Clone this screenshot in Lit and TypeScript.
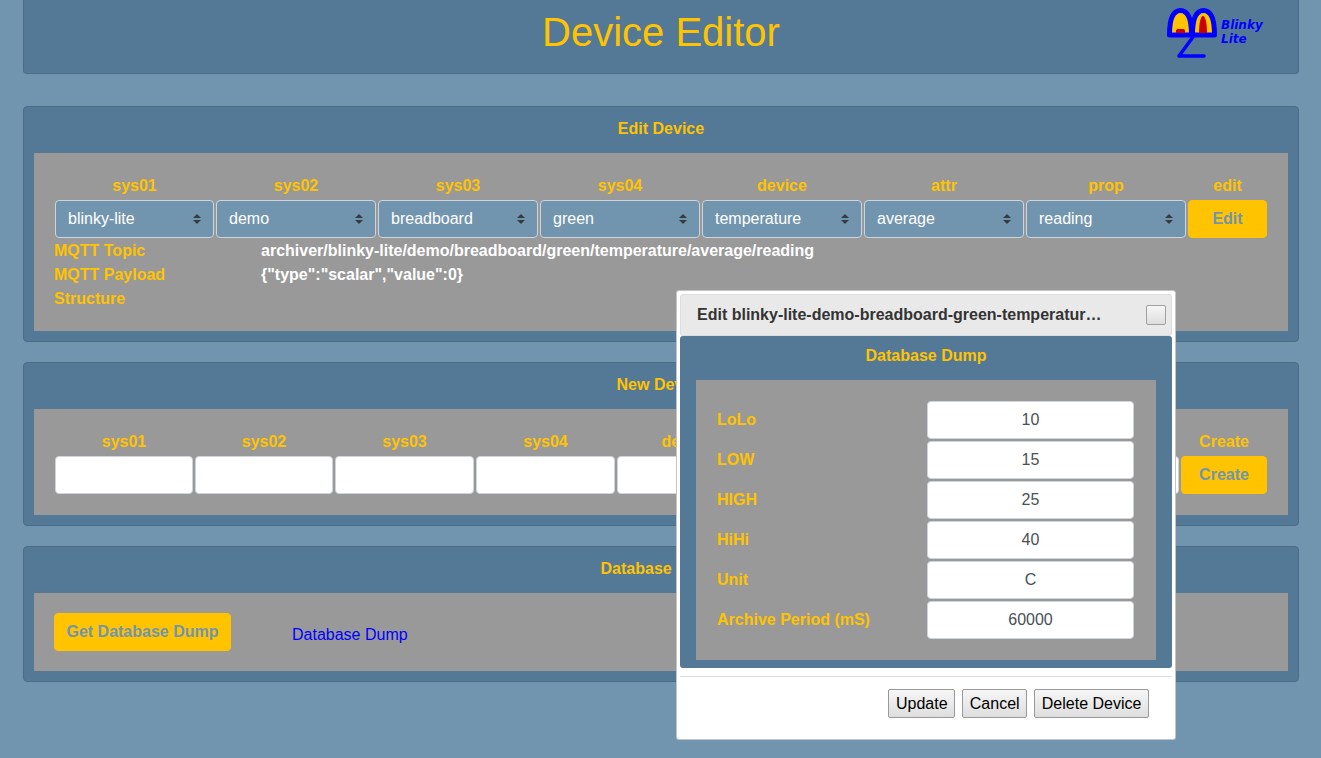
import { LitElement, css, html } from 'lit';
import { customElement } from 'lit/decorators.js';

const EDIT_FIELDS = [
  { label: 'sys01', value: 'blinky-lite' },
  { label: 'sys02', value: 'demo' },
  { label: 'sys03', value: 'breadboard' },
  { label: 'sys04', value: 'green' },
  { label: 'device', value: 'temperature' },
  { label: 'attr', value: 'average' },
  { label: 'prop', value: 'reading' },
];

const NEW_FIELDS = ['sys01', 'sys02', 'sys03', 'sys04', 'device', 'attr', 'prop', 'type'];

const INFO_ROWS = [
  { label: 'MQTT Topic', value: 'archiver/blinky-lite/demo/breadboard/green/temperature/average/reading' },
  { label: 'MQTT Payload', value: '{"type":"scalar","value":0}' },
  { label: 'Structure', value: '' },
];

const LIMITS = [
  { label: 'LoLo', value: '10' },
  { label: 'LOW', value: '15' },
  { label: 'HIGH', value: '25' },
  { label: 'HiHi', value: '40' },
  { label: 'Unit', value: 'C' },
  { label: 'Archive Period (mS)', value: '60000' },
];

@customElement('app-root')
export class AppRoot extends LitElement {
  static styles = css`
    :host {
      display: block;
      position: relative;
      min-height: 758px;
      background: #7295af;
      font-family: 'Liberation Sans', Arial, sans-serif;
      font-size: 16px;
      line-height: 24px;
      color: #ffc300;
      overflow: hidden;
    }

    .page {
      display: flex;
      flex-direction: column;
      gap: 20px;
      padding: 0 22px 0 23px;
    }

    .panel {
      border: 1px solid #4a6d89;
      border-radius: 4px;
      background: #547996;
    }

    .header {
      height: 74px;
      box-sizing: border-box;
      margin-bottom: 12px;
      position: relative;
      border-top: none;
      border-radius: 0 0 4px 4px;
      display: flex;
      justify-content: center;
    }

    .header h1 {
      margin: 0;
      font-size: 40px;
      line-height: 64px;
      font-weight: 400;
      color: #ffc300;
    }

    .logo {
      position: absolute;
      left: 1140px;
      top: 4px;
    }

    .panel-title {
      height: 44px;
      padding-bottom: 2px;
      display: flex;
      align-items: center;
      justify-content: center;
      font-weight: 700;
    }

    .body {
      margin: 0 10px 10px;
      background: #999999;
      padding: 20px;
    }

    .edit-grid {
      display: grid;
      grid-template-columns: 161px repeat(6, 162px) 81px;
    }

    .new-grid {
      display: grid;
      grid-template-columns: 140px 140px repeat(6, 141px) 88px;
    }

    .edit-grid > *,
    .new-grid > * {
      min-width: 0;
    }

    .col-label {
      height: 26px;
      padding-top: 1px;
      box-sizing: border-box;
      line-height: 24px;
      text-align: center;
      font-weight: 700;
    }

    .cell {
      padding: 1px;
      height: 38px;
    }

    select,
    .field {
      display: block;
      box-sizing: border-box;
      width: 100%;
      height: 38px;
      border: 1px solid #ced4da;
      border-radius: 4px;
      font: inherit;
    }

    select {
      appearance: none;
      padding: 0 28px 0 12px;
      color: #ffffff;
      background: #7295af
        url("data:image/svg+xml,%3csvg xmlns='http://www.w3.org/2000/svg' width='4' height='5' viewBox='0 0 4 5'%3e%3cpath fill='%23343a40' d='M2 0L0 2h4zm0 5L0 3h4z'/%3e%3c/svg%3e")
        no-repeat right 12px center / 8px 10px;
    }

    .field {
      padding: 0 12px;
      color: #495057;
      background: #ffffff;
    }

    .field.centered {
      text-align: center;
    }

    .action {
      display: block;
      box-sizing: border-box;
      width: 100%;
      height: 38px;
      padding: 0 12px;
      border: 1px solid #ffc300;
      border-radius: 4px;
      background: #ffc300;
      color: #7295af;
      font: inherit;
      font-weight: 700;
    }

    .info {
      display: grid;
      grid-template-columns: 207px 1fr;
      font-weight: 700;
    }

    .info-value {
      color: #ffffff;
    }

    .dump-row {
      display: flex;
      align-items: center;
      gap: 61px;
    }

    .dump-row .action {
      width: 177px;
      padding: 0;
    }

    .dump-link {
      color: #0000ff;
      position: relative;
      top: 3px;
    }

    .dialog {
      position: absolute;
      left: 676px;
      top: 290px;
      box-sizing: border-box;
      width: 500px;
      height: 450px;
      padding: 3px;
      background: #ffffff;
      border: 1px solid #c5c5c5;
      border-radius: 3px;
      display: flex;
      flex-direction: column;
    }

    .dialog-bar {
      box-sizing: border-box;
      height: 42px;
      display: flex;
      align-items: center;
      padding: 0 5px 0 16px;
      background: #e9e9e9;
      border: 1px solid #dddddd;
      border-radius: 3px;
      color: #333333;
      font-weight: 700;
    }

    .dialog-title {
      width: 405px;
      white-space: nowrap;
      overflow: hidden;
      text-overflow: ellipsis;
    }

    .dialog-close {
      box-sizing: border-box;
      width: 20px;
      height: 20px;
      margin-left: auto;
      padding: 0;
      border: 1px solid #a0a0a0;
      border-radius: 2px;
      background: linear-gradient(#f6f6f6, #dedede);
    }

    .dialog-panel {
      border-radius: 3px;
      background: #547996;
      padding-bottom: 8px;
    }

    .dialog-panel .panel-title {
      height: 40px;
      padding-bottom: 4px;
    }

    .dialog-panel .body {
      margin: 0 16px;
    }

    .limits {
      display: grid;
      grid-template-columns: 210px 209px;
    }

    .limit-label {
      height: 40px;
      display: flex;
      align-items: center;
      padding-left: 1px;
      font-weight: 700;
    }

    .dialog-foot {
      margin-top: 8px;
      border-top: 1px solid #dddddd;
      padding-top: 12px;
      display: flex;
      justify-content: flex-end;
      gap: 7px;
      padding-right: 23px;
    }

    .dialog-foot button {
      box-sizing: border-box;
      height: 29px;
      padding: 0 6.6px;
      border: 1px solid #999999;
      border-radius: 2px;
      background: linear-gradient(#f6f6f6, #dedede);
      color: #000000;
      font: inherit;
    }
  `;

  render() {
    return html`
      <div class="page">
        <header class="panel header">
          <h1>Device Editor</h1>
          ${this.renderLogo()}
        </header>

        <section class="panel">
          <div class="panel-title">Edit Device</div>
          <div class="body">
            <div class="edit-grid">
              ${EDIT_FIELDS.map((f) => html`<div class="col-label">${f.label}</div>`)}
              <div class="col-label">edit</div>
              ${EDIT_FIELDS.map(
                (f) => html`<div class="cell"><select><option>${f.value}</option></select></div>`,
              )}
              <div class="cell"><button class="action" type="button">Edit</button></div>
            </div>
            <div class="info">
              ${INFO_ROWS.map(
                (r) => html`<div>${r.label}</div><div class="info-value">${r.value}</div>`,
              )}
            </div>
          </div>
        </section>

        <section class="panel">
          <div class="panel-title">New Device</div>
          <div class="body">
            <div class="new-grid">
              ${NEW_FIELDS.map((f) => html`<div class="col-label">${f}</div>`)}
              <div class="col-label">Create</div>
              ${NEW_FIELDS.map(() => html`<div class="cell"><input class="field" type="text" /></div>`)}
              <div class="cell"><button class="action" type="button">Create</button></div>
            </div>
          </div>
        </section>

        <section class="panel">
          <div class="panel-title">Database Dump</div>
          <div class="body dump-row">
            <button class="action" type="button">Get Database Dump</button>
            <a class="dump-link">Database Dump</a>
          </div>
        </section>
      </div>

      <div class="dialog">
        <div class="dialog-bar">
          <span class="dialog-title">Edit blinky-lite-demo-breadboard-green-temperature-average</span>
          <button class="dialog-close" type="button" aria-label="Close"></button>
        </div>
        <div class="dialog-panel">
          <div class="panel-title">Database Dump</div>
          <div class="body">
            <div class="limits">
              ${LIMITS.map(
                (l) => html`
                  <div class="limit-label">${l.label}</div>
                  <div class="cell"><input class="field centered" type="text" .value=${l.value} /></div>
                `,
              )}
            </div>
          </div>
        </div>
        <div class="dialog-foot">
          <button type="button">Update</button>
          <button type="button">Cancel</button>
          <button type="button">Delete Device</button>
        </div>
      </div>
    `;
  }

  private renderLogo() {
    return html`
      <svg class="logo" width="110" height="60" viewBox="1164 4 110 60">
        <path d="M1169.500 35C1169.500 18 1174 10.500 1180.500 10.500C1187 10.500 1191.500 18 1191.500 35Z" fill="#ffc300" stroke="#0000ff" stroke-width="5" stroke-linejoin="round" />
        <path d="M1192.500 35C1192.500 18 1197 10.500 1203.500 10.500C1210 10.500 1214.500 18 1214.500 35Z" fill="#ffc300" stroke="#0000ff" stroke-width="5" stroke-linejoin="round" />
        <path d="M1176 33V31C1176 29.500 1177 29 1178 29H1183C1184 29 1185 29.500 1185 31V33Z" fill="#c80000" />
        <path d="M1199 33C1199 22 1201 16 1203 16C1205 16 1207 22 1207 33Z" fill="#c80000" />
        <path d="M1193 37L1179 56H1204" fill="none" stroke="#0000ff" stroke-width="3.500" stroke-linecap="round" stroke-linejoin="round" />
        <text x="1221" y="29" fill="#0000ff" font-family="DejaVu Sans" font-size="12" font-weight="700" font-style="italic">Blinky</text>
        <text x="1221" y="43" fill="#0000ff" font-family="DejaVu Sans" font-size="12" font-weight="700" font-style="italic">Lite</text>
      </svg>
    `;
  }
}

declare global {
  interface HTMLElementTagNameMap {
    'app-root': AppRoot;
  }
}
